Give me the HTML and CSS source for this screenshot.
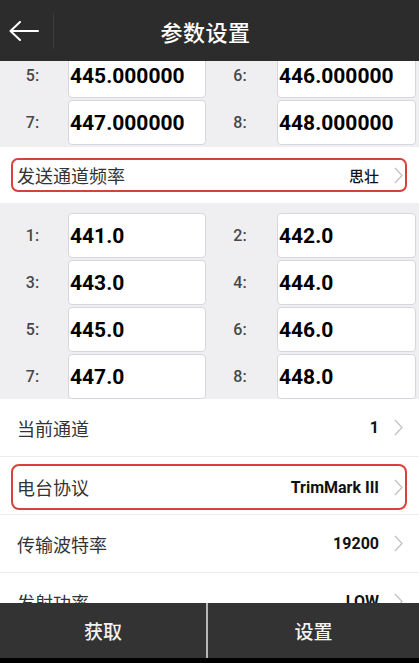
FILE: index.html
```html
<!DOCTYPE html>
<html lang="zh">
<head>
<meta charset="utf-8">
<title>参数设置</title>
<link rel="stylesheet" href="styles.css">
</head>
<body>
<div class="app">
  <header class="header">
    <div class="back">
      <svg width="30" height="20" viewBox="0 0 30 20"><path d="M1.5 10 H29 M11 1 L1.5 10 L11 19" fill="none" stroke="#fff" stroke-width="2" stroke-linecap="round" stroke-linejoin="round"/></svg>
    </div>
    <div class="hdiv"></div>
    <div class="title">参数设置</div>
  </header>

  <main class="scroll">
    <section class="grid grid-top">
      <div class="lab">5:</div><div class="box">445.000000</div>
      <div class="lab">6:</div><div class="box">446.000000</div>
      <div class="lab">7:</div><div class="box">447.000000</div>
      <div class="lab">8:</div><div class="box">448.000000</div>
    </section>

    <section class="freq">
      <div class="freq-box">
        <span class="name">发送通道频率</span>
        <span class="val val-cn">思壮</span>
        <svg class="chev" width="9" height="17" viewBox="0 0 9 17"><path d="M1 1 L8 8.5 L1 16" fill="none" stroke="#c2c2c2" stroke-width="1.3"/></svg>
      </div>
    </section>

    <section class="grid grid-main">
      <div class="lab">1:</div><div class="box">441.0</div>
      <div class="lab">2:</div><div class="box">442.0</div>
      <div class="lab">3:</div><div class="box">443.0</div>
      <div class="lab">4:</div><div class="box">444.0</div>
      <div class="lab">5:</div><div class="box">445.0</div>
      <div class="lab">6:</div><div class="box">446.0</div>
      <div class="lab">7:</div><div class="box">447.0</div>
      <div class="lab">8:</div><div class="box">448.0</div>
    </section>

    <section class="list">
      <div class="row">
        <span class="name">当前通道</span>
        <span class="val">1</span>
        <svg class="chev" width="9" height="17" viewBox="0 0 9 17"><path d="M1 1 L8 8.5 L1 16" fill="none" stroke="#c2c2c2" stroke-width="1.3"/></svg>
      </div>
      <div class="row row-hl">
        <div class="hl-box">
          <span class="name">电台协议</span>
          <span class="val">TrimMark III</span>
          <svg class="chev" width="9" height="17" viewBox="0 0 9 17"><path d="M1 1 L8 8.5 L1 16" fill="none" stroke="#c2c2c2" stroke-width="1.3"/></svg>
        </div>
      </div>
      <div class="row">
        <span class="name">传输波特率</span>
        <span class="val">19200</span>
        <svg class="chev" width="9" height="17" viewBox="0 0 9 17"><path d="M1 1 L8 8.5 L1 16" fill="none" stroke="#c2c2c2" stroke-width="1.3"/></svg>
      </div>
      <div class="row">
        <span class="name">发射功率</span>
        <span class="val">LOW</span>
        <svg class="chev" width="9" height="17" viewBox="0 0 9 17"><path d="M1 1 L8 8.5 L1 16" fill="none" stroke="#c2c2c2" stroke-width="1.3"/></svg>
      </div>
    </section>
  </main>

  <footer class="footer">
    <button class="fbtn fbtn-left">获取</button>
    <div class="fdiv"></div>
    <button class="fbtn">设置</button>
  </footer>
</div>
</body>
</html>
```

FILE: styles.css
```css
* { box-sizing: border-box; }
html, body { margin: 0; padding: 0; }
body {
  width: 419px;
  height: 663px;
  overflow: hidden;
  background: #fff;
  font-family: Roboto, "Noto Sans CJK SC", sans-serif;
  color: #333;
}
.app {
  display: flex;
  flex-direction: column;
  height: 663px;
}
.header {
  height: 61px;
  flex-shrink: 0;
  background: #2c2c2c;
  display: flex;
  align-items: center;
  position: relative;
  z-index: 2;
}
.back {
  width: 53px;
  height: 61px;
  display: flex;
  align-items: center;
  padding-left: 9px;
}
.hdiv {
  width: 1px;
  height: 36px;
  background: #3c3c3c;
}
.title {
  flex: 1;
  text-align: center;
  color: #fff;
  font-size: 22px;
  font-family: "Noto Sans CJK SC", sans-serif;
  font-weight: 500;
  padding-right: 62px;
  letter-spacing: 0.5px;
}
.scroll {
  flex: 1;
  overflow: hidden;
  min-height: 0;
}
.grid {
  background: #efeff1;
  display: grid;
  grid-template-columns: 68px 138px 71px 139px;
  grid-auto-rows: 45px;
  row-gap: 2px;
}
.grid-top {
  margin-top: -8px;
  padding-bottom: 2px;
}
.grid-main {
  padding-top: 10px;
}
.lab {
  display: flex;
  align-items: center;
  justify-content: center;
  font-size: 16px;
  font-weight: 500;
  color: #484848;
  padding-right: 3px;
}
.box {
  background: #fff;
  border: 1px solid #d6d6de;
  border-radius: 4px;
  display: flex;
  align-items: center;
  padding-left: 1px;
  font-size: 21px;
  font-weight: 700;
  color: #000;
}
.freq {
  background: #fff;
  padding: 11px 12px 11px 11px;
}
.freq-box {
  height: 34px;
  border: 2px solid #d8403b;
  border-radius: 7px;
  display: flex;
  align-items: center;
  padding: 0 2px 0 4px;
}
.name {
  flex: 1;
  font-size: 18px;
  font-family: "Noto Sans CJK SC", sans-serif;
  color: #333;
}
.val {
  font-size: 16px;
  font-weight: 700;
  color: #111;
  margin-right: 15px;
}
.val-cn {
  font-family: "Noto Sans CJK SC", sans-serif;
  font-size: 15px;
  font-weight: 500;
}
.chev { display: block; flex-shrink: 0; }
.list { background: #fff; }
.row {
  height: 58px;
  border-bottom: 1px solid #ececec;
  display: flex;
  align-items: center;
  padding: 0 16px 0 17px;
}
.row-hl {
  padding: 7px 12px 4px 11px;
  align-items: stretch;
}
.hl-box {
  flex: 1;
  border: 2px solid #d8403b;
  border-radius: 8px;
  display: flex;
  align-items: center;
  padding: 0 2px 0 4px;
}
.footer {
  height: 60px;
  flex-shrink: 0;
  background: #333;
  border-bottom: 5px solid #000;
  display: flex;
  align-items: stretch;
}
.fbtn {
  flex: 1;
  background: transparent;
  border: 0;
  margin: 0;
  padding: 0;
  color: #f2f2f2;
  font-size: 19px;
  font-weight: 500;
  font-family: "Noto Sans CJK SC", sans-serif;
}
.fbtn-left {
  flex: 0 0 206px;
}
.fdiv {
  width: 2px;
  background: #b8b8b8;
}
```
